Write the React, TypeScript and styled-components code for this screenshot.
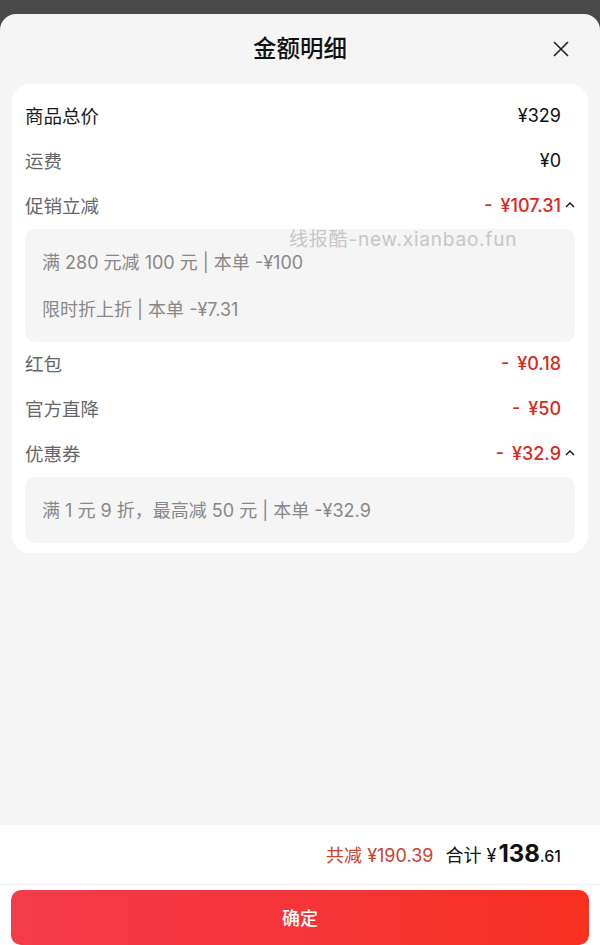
import React from "react";
import styled, { createGlobalStyle } from "styled-components";

const Global = createGlobalStyle`
  html, body { margin: 0; padding: 0; }
  body {
    width: 600px;
    height: 945px;
    overflow: hidden;
    font-family: Inter, "Noto Sans CJK SC", "Noto Sans", sans-serif;
    background: #4a4a4a;
  }
  #root { height: 945px; }
`;

const Page = styled.div`
  height: 945px;
  display: flex;
  flex-direction: column;
  background: #4a4a4a;
`;

const Dim = styled.div`
  height: 14px;
  flex: none;
`;

const Sheet = styled.div`
  flex: 1;
  min-height: 0;
  display: flex;
  flex-direction: column;
  background: #f5f5f5;
  border-radius: 16px 16px 0 0;
  overflow: hidden;
`;

const Header = styled.div`
  height: 70px;
  flex: none;
  display: grid;
  grid-template-columns: 1fr auto 1fr;
  align-items: center;
  padding: 0 31px;
`;

const Title = styled.div`
  grid-column: 2;
  font-size: 23.5px;
  font-weight: 500;
  color: #111;
  padding-bottom: 4px;
`;

const CloseButton = styled.button`
  grid-column: 3;
  justify-self: end;
  width: 16px;
  height: 16px;
  padding: 0;
  border: none;
  background: none;
  display: flex;
`;

const Card = styled.div`
  flex: none;
  margin: 0 12px;
  padding: 10px 13px;
  background: #fff;
  border-radius: 18px;
  display: flex;
  flex-direction: column;
`;

const Row = styled.div`
  height: 45px;
  box-sizing: border-box;
  padding-bottom: 3px;
  display: flex;
  align-items: center;
  justify-content: space-between;
`;

const Label = styled.span<{ $strong?: boolean }>`
  font-size: 18.5px;
  color: ${(p) => (p.$strong ? "#1a1a1a" : "#666")};
`;

const ValueGroup = styled.div`
  display: flex;
  align-items: center;
`;

const Value = styled.span<{ $red?: boolean }>`
  font-size: 18px;
  color: ${(p) => (p.$red ? "#d8291d" : "#111")};
  font-weight: ${(p) => (p.$red ? 500 : 400)};
  word-spacing: 3px;
`;

const ChevronSlot = styled.span`
  width: 14px;
  height: 14px;
  display: flex;
  align-items: center;
  justify-content: flex-end;
  padding-bottom: 2px;
`;

const DetailBox = styled.div`
  position: relative;
  background: #f5f5f5;
  border-radius: 10px;
  padding: 21px 17px;
  display: flex;
  flex-direction: column;
  gap: 23px;
`;

const DetailLine = styled.div`
  font-size: 18px;
  line-height: 24px;
  color: #888;
  transform: translateY(1px);
`;

const Watermark = styled.div`
  position: absolute;
  top: 0;
  left: 264px;
  font-size: 19px;
  line-height: 22px;
  letter-spacing: 0.8px;
  color: #c6c6c6;
  white-space: nowrap;
`;

const Spacer = styled.div`
  flex: 1;
`;

const Footer = styled.div`
  height: 60px;
  flex: none;
  box-sizing: border-box;
  background: #fff;
  border-bottom: 1px solid #f1f1f1;
  display: flex;
  align-items: center;
  justify-content: flex-end;
  padding: 0 39px 2px 0;
  gap: 12px;
`;

const Saved = styled.span`
  font-size: 18px;
  color: #c9412f;
`;

const Total = styled.span`
  font-size: 18px;
  color: #111;
  display: flex;
  align-items: baseline;
`;

const TotalInt = styled.span`
  font-size: 24px;
  font-weight: 700;
  margin-left: 2px;
`;

const TotalDec = styled.span`
  font-size: 16px;
  font-weight: 500;
`;

const ButtonArea = styled.div`
  flex: none;
  height: 60px;
  box-sizing: border-box;
  background: #fff;
  padding: 5px 11px 0;
`;

const ConfirmButton = styled.button`
  width: 100%;
  height: 55px;
  border: none;
  border-radius: 10px;
  background: linear-gradient(90deg, #f33c4a 0%, #f5353a 50%, #f8301f 100%);
  color: #fff;
  font-family: inherit;
  font-size: 18px;
  font-weight: 500;
  padding: 0 0 2px;
`;

const ChevronUp = () => (
  <svg width="10" height="7" viewBox="0 0 10 7">
    <polyline points="1,6 5,2 9,6" fill="none" stroke="#111" strokeWidth="1.4" />
  </svg>
);

type Item = {
  label: string;
  value: string;
  strong?: boolean;
  red?: boolean;
  details?: string[];
  watermark?: boolean;
};

const items: Item[] = [
  { label: "商品总价", value: "¥329", strong: true },
  { label: "运费", value: "¥0" },
  {
    label: "促销立减",
    value: "- ¥107.31",
    red: true,
    details: ["满 280 元减 100 元 | 本单 -¥100", "限时折上折 | 本单 -¥7.31"],
    watermark: true,
  },
  { label: "红包", value: "- ¥0.18", red: true },
  { label: "官方直降", value: "- ¥50", red: true },
  {
    label: "优惠券",
    value: "- ¥32.9",
    red: true,
    details: ["满 1 元 9 折，最高减 50 元 | 本单 -¥32.9"],
  },
];

export default function App() {
  return (
    <Page>
      <Global />
      <Dim />
      <Sheet>
        <Header>
          <Title>金额明细</Title>
          <CloseButton aria-label="close">
            <svg width="16" height="16" viewBox="0 0 16 16">
              <path d="M1 1 L15 15 M15 1 L1 15" stroke="#222" strokeWidth="1.6" />
            </svg>
          </CloseButton>
        </Header>
        <Card>
          {items.map((it) => (
            <React.Fragment key={it.label}>
              <Row>
                <Label $strong={it.strong}>{it.label}</Label>
                <ValueGroup>
                  <Value $red={it.red}>{it.value}</Value>
                  <ChevronSlot>{it.details ? <ChevronUp /> : null}</ChevronSlot>
                </ValueGroup>
              </Row>
              {it.details && (
                <DetailBox>
                  {it.details.map((d) => (
                    <DetailLine key={d}>{d}</DetailLine>
                  ))}
                  {it.watermark && <Watermark>线报酷-new.xianbao.fun</Watermark>}
                </DetailBox>
              )}
            </React.Fragment>
          ))}
        </Card>
        <Spacer />
        <Footer>
          <Saved>共减 ¥190.39</Saved>
          <Total>
            合计 ¥<TotalInt>138</TotalInt>
            <TotalDec>.61</TotalDec>
          </Total>
        </Footer>
        <ButtonArea>
          <ConfirmButton>确定</ConfirmButton>
        </ButtonArea>
      </Sheet>
    </Page>
  );
}
